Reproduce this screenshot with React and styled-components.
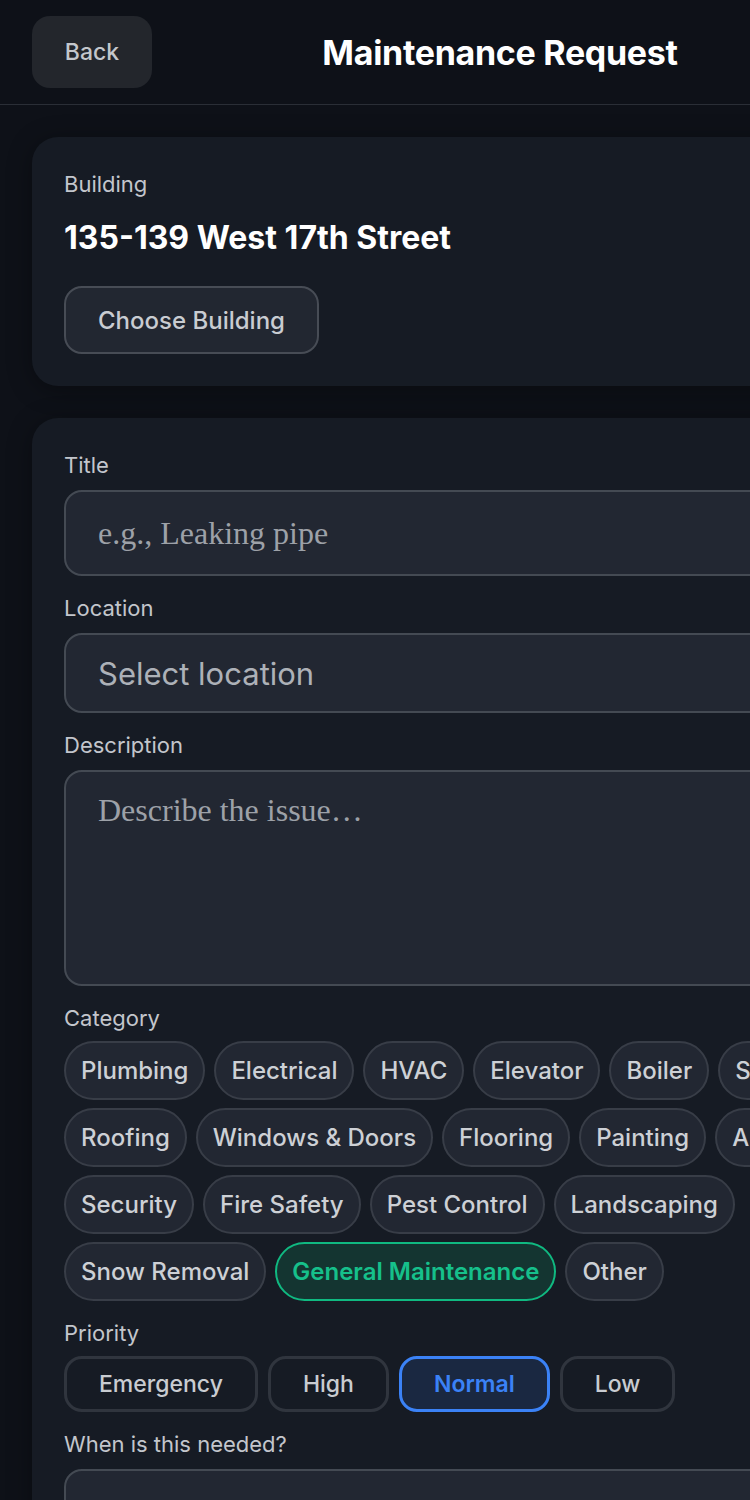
import React from 'react';
import styled, { createGlobalStyle } from 'styled-components';

const GlobalStyle = createGlobalStyle`
  html, body {
    margin: 0;
    padding: 0;
    background: #0d1017;
  }
  body {
    font-family: Inter, "Noto Sans", "Liberation Sans", sans-serif;
    color: #e6e8eb;
  }
  * {
    box-sizing: border-box;
  }
`;

const Page = styled.div`
  width: 1000px;
  min-height: 1500px;
  background: #0e1118;
`;

const Header = styled.header`
  display: grid;
  grid-template-columns: 1fr auto 1fr;
  align-items: center;
  padding: 16px 32px;
  border-bottom: 1px solid #2a2e36;
`;

const BackButton = styled.button`
  justify-self: start;
  width: 120px;
  height: 72px;
  border: none;
  border-radius: 18px;
  background: #23262c;
  color: #c4c7cc;
  font-family: inherit;
  font-size: 23px;
  font-weight: 500;
`;

const HeaderTitle = styled.h1`
  margin: 0;
  font-size: 34px;
  font-weight: 700;
  color: #ffffff;
  letter-spacing: -0.3px;
`;

const Main = styled.main`
  display: flex;
  flex-direction: column;
  gap: 32px;
  padding: 32px 32px 0;
`;

const Card = styled.section`
  display: flex;
  flex-direction: column;
  padding: 32px;
  border-radius: 26px;
  background: #161b24;
  box-shadow: 0 4px 24px rgba(0, 0, 0, 0.35);
`;

const Field = styled.div`
  display: flex;
  flex-direction: column;
  gap: ${p => p.$gap || 10}px;
  & + & {
    margin-top: 17px;
  }
`;

const Label = styled.label`
  font-size: 22px;
  line-height: 30px;
  color: #c3c6cc;
`;

const BuildingName = styled.div`
  margin: 20px 0 29px;
  font-size: 32px;
  line-height: 38px;
  font-weight: 700;
  color: #ffffff;
`;

const OutlineButton = styled.button`
  align-self: flex-start;
  height: 68px;
  padding: 0 32px;
  border: 2px solid #474c55;
  border-radius: 18px;
  background: #222731;
  color: #c9ccd1;
  font-family: inherit;
  font-size: 24px;
  font-weight: 500;
`;

const TextInput = styled.input`
  height: ${p => p.$h || 86}px;
  padding: 0 32px;
  border: 2px solid #444a53;
  border-radius: 18px;
  background: #222732;
  color: #e6e8eb;
  font-family: "Liberation Serif", serif;
  font-size: 32px;
  outline: none;
  &::placeholder {
    color: #9da1a8;
  }
`;

const SelectBox = styled.div`
  display: flex;
  align-items: center;
  height: 80px;
  padding: 0 32px;
  border: 2px solid #444a53;
  border-radius: 18px;
  background: #222732;
  color: #adb1b8;
  font-size: 31px;
`;

const TextArea = styled.textarea`
  height: 216px;
  padding: 20px 32px;
  border: 2px solid #444a53;
  border-radius: 18px;
  background: #222732;
  color: #e6e8eb;
  font-family: "Liberation Serif", serif;
  font-size: 32px;
  resize: none;
  outline: none;
  &::placeholder {
    color: #9da1a8;
  }
`;

const ChipWrap = styled.div`
  display: flex;
  flex-wrap: wrap;
  gap: 8px 9px;
`;

const Chip = styled.button`
  height: 59px;
  padding: 0 15px;
  border: 2px solid ${p => (p.$active ? '#10b981' : '#383d47')};
  border-radius: 30px;
  background: ${p => (p.$active ? '#143531' : '#222732')};
  color: ${p => (p.$active ? '#16c08b' : '#cdd0d5')};
  font-family: inherit;
  font-size: 24px;
  font-weight: ${p => (p.$active ? 600 : 500)};
  white-space: nowrap;
`;

const PriorityRow = styled.div`
  display: flex;
  gap: 10px;
`;

const PriorityButton = styled.button`
  height: 56px;
  padding: 0 32px;
  border: 3px solid ${p => (p.$active ? '#3b82f6' : '#30353e')};
  border-radius: 18px;
  background: ${p => (p.$active ? '#1a2841' : 'transparent')};
  color: ${p => (p.$active ? '#3b82f6' : '#c9ccd1')};
  font-family: inherit;
  font-size: 23px;
  font-weight: ${p => (p.$active ? 600 : 500)};
`;

const categories = [
  'Plumbing',
  'Electrical',
  'HVAC',
  'Elevator',
  'Boiler',
  'Structural',
  'Roofing',
  'Windows & Doors',
  'Flooring',
  'Painting',
  'Appliances',
  'Security',
  'Fire Safety',
  'Pest Control',
  'Landscaping',
  'Snow Removal',
  'General Maintenance',
  'Other'
];

const priorities = ['Emergency', 'High', 'Normal', 'Low'];

export default function App() {
  return (
    <Page>
      <GlobalStyle />
      <Header>
        <BackButton>Back</BackButton>
        <HeaderTitle>Maintenance Request</HeaderTitle>
        <div />
      </Header>
      <Main>
        <Card>
          <Label>Building</Label>
          <BuildingName>135-139 West 17th Street</BuildingName>
          <OutlineButton>Choose Building</OutlineButton>
        </Card>
        <Card>
          <Field>
            <Label>Title</Label>
            <TextInput placeholder="e.g., Leaking pipe" />
          </Field>
          <Field>
            <Label>Location</Label>
            <SelectBox>Select location</SelectBox>
          </Field>
          <Field>
            <Label>Description</Label>
            <TextArea placeholder="Describe the issue…" />
          </Field>
          <Field $gap={8}>
            <Label>Category</Label>
            <ChipWrap>
              {categories.map(c => (
                <Chip key={c} $active={c === 'General Maintenance'}>
                  {c}
                </Chip>
              ))}
            </ChipWrap>
          </Field>
          <Field $gap={8}>
            <Label>Priority</Label>
            <PriorityRow>
              {priorities.map(p => (
                <PriorityButton key={p} $active={p === 'Normal'}>
                  {p}
                </PriorityButton>
              ))}
            </PriorityRow>
          </Field>
          <Field>
            <Label>When is this needed?</Label>
            <TextInput $h={80} />
          </Field>
        </Card>
      </Main>
    </Page>
  );
}
